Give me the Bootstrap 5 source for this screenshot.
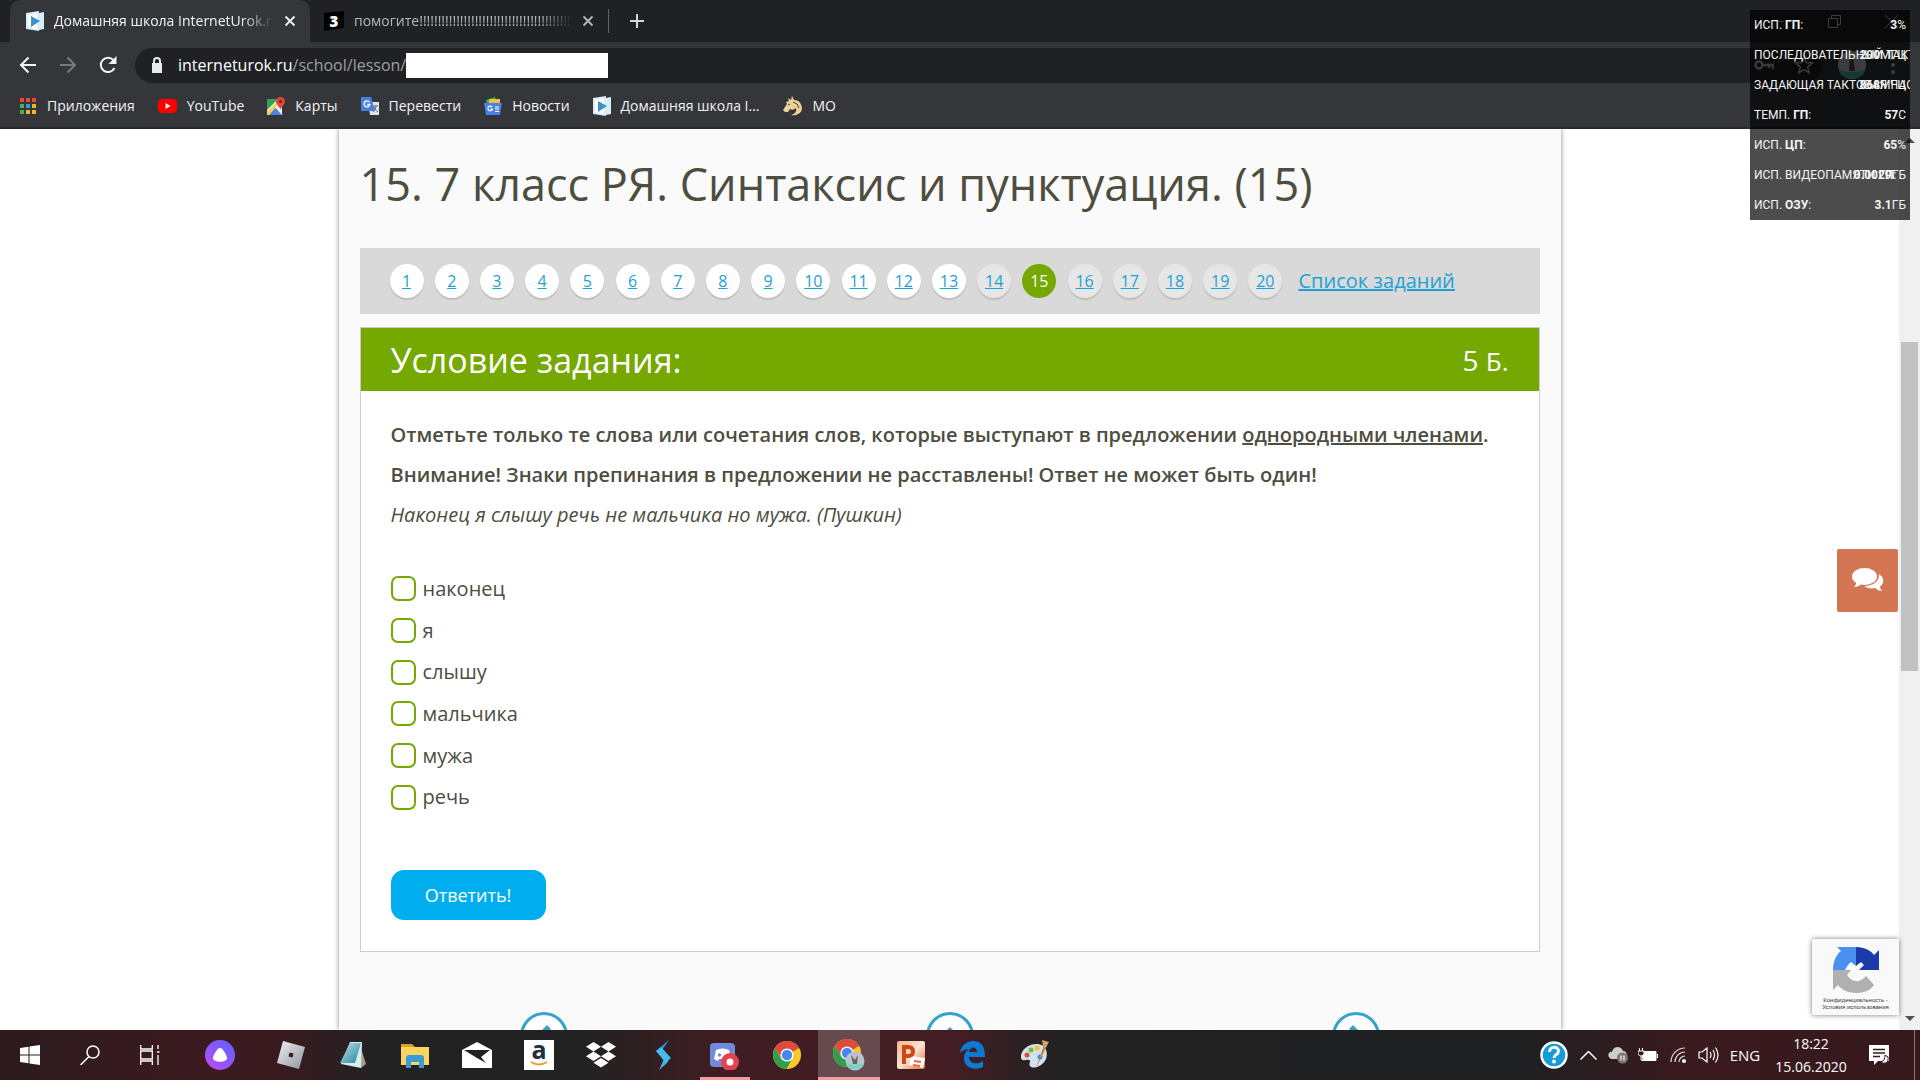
<!DOCTYPE html>
<html lang="ru">
<head>
<meta charset="utf-8">
<meta name="viewport" content="width=device-width, initial-scale=1">
<title>Домашняя школа InternetUrok.ru</title>
<link href="https://cdn.jsdelivr.net/npm/bootstrap@5.3.0/dist/css/bootstrap.min.css" rel="stylesheet">
<style>
:root{--shell:#202124;--bar:#35363a;--leaf:#75a800;--sky:#1da2d4;--ink:#4d4d40}
body{font-family:"Open Sans","Noto Sans",sans-serif;color:var(--ink);background:#fff}
svg{display:block;flex:none}
button{font-family:inherit}
.bare{border:0;background:none;padding:0;color:inherit;display:flex;align-items:center;justify-content:center}
/* browser frame */
.browser{background:var(--bar);color:#f1f3f4;font-size:14px;line-height:20px;border-bottom:2px solid #28292c}
.tabstrip{background:var(--shell);height:42px;padding-left:10px}
.tab-item{height:42px;width:300px;padding:0 14px 0 16px;gap:10px}
.tab-item.on{background:var(--bar);border-radius:10px 10px 0 0}
.tab-item .label{flex:1;overflow:hidden;white-space:nowrap;-webkit-mask-image:linear-gradient(90deg,#000 85%,transparent)}
.tab-item:not(.on){color:#b4b8bd;width:294px;padding:0 10px 0 14px}
.split{width:1px;height:24px;background:#5f6368}
.w40{width:40px;height:40px}
.winbtn{width:57px}
.toolbar-row{padding:3px 8px 0}
.address{height:35px;background:var(--shell);border-radius:18px;font-size:16px;padding:0 8px 0 13px;margin-left:7px}
.address .host{color:#fff}.address .path{color:#9aa0a6}
.address input{width:202px;height:25px;border:0;background:#fff;padding:0 6px;font-size:15px}
.marks{height:42px;gap:23px;padding-left:19px}
.marks a{color:#f1f3f4;text-decoration:none;display:flex;align-items:center;gap:10px;white-space:nowrap}
/* page */
.viewport{min-height:0}
.sheet{width:1222px;max-width:100%;background:#fafafa;box-shadow:0 0 5px #888;padding:0 21px}
.sheet h1{font-size:45px;line-height:60px;margin:25px 0 34px;font-weight:400}
.pager{background:#d9d9d9;height:66px;padding:0 30px;gap:16px}
.pager ul{width:893px}
.num{width:34px;height:34px;border-radius:50%;background:#fff;color:var(--sky);font-size:16px;line-height:34px;text-align:center;display:block;box-shadow:0 2px 1px #bfbfbf}
.num.dim{background:#e6e6e6}
.num.now{background:var(--leaf);color:#fff;text-decoration:none;box-shadow:none}
.pager .all{color:var(--sky);font-size:20px;white-space:nowrap}
.task{margin-top:13px;background:#fff;border:1px solid #ccc}
.task header{background:var(--leaf);color:#fff;height:63px;padding:0 30px}
.task h2{font-size:34px;line-height:48px;margin:0;font-weight:400}
.pts{font-size:28px}.pts small{font-size:26px}
.inner{padding:24px 30px 31px}
.inner p{font-size:20px;line-height:40px;margin:0}
.inner strong{font-weight:600}
.opts{height:250px;margin:33px 0 52px;font-size:20px;line-height:28px}
.opts label{display:flex;align-items:center;gap:7px;flex:1}
.opts input{appearance:none;width:25px;height:25px;border:2px solid var(--leaf);border-radius:7px;margin:0;background:#fff}
.send{background:#00aeef;color:#fff;border:0;border-radius:13px;width:155px;height:50px;font-size:18px}
.steps{margin:60px -19px 0}
.steps a{flex:1;display:flex;justify-content:center}
/* vertical scroll rail */
.rail{width:21px;background:#f0f0f0;padding:5px 2px;align-items:center}
.thumb{flex:0 0 329px;width:17px;background:#c1c1c1;margin-top:199px}
.chat{right:22px;top:420px;width:61px;height:63px;background:#d47554;border-radius:2px}
.captcha{right:21px;bottom:15px;width:87px;height:76px;background:#f9f9f9;box-shadow:0 0 5px #777;font:6px/7px "Liberation Sans",sans-serif;color:#333;text-align:center;border-radius:2px 0 0 2px;padding-top:8px;white-space:nowrap}
/* gpu monitor */
.gpu{right:10px;top:10px;width:160px;background:rgba(0,0,0,.7);color:#f4f4f4;font:12px/30px Roboto,sans-serif;z-index:5}
.gpu div{position:relative;height:30px;padding-left:4px;white-space:nowrap;overflow:hidden}
.gpu span{position:absolute;right:4px;top:0}
/* taskbar */
.taskbar{height:50px;color:#fff;background:linear-gradient(90deg,#2c1b1e 0,#3b1a20 200px,#3b1a20 270px,#222 380px,#222 580px,#3f1d22 720px,#431d23 950px,#222 1060px,#1f2022 1520px,#3b1a1f 1690px,#35191c)}
.taskbar button{height:50px;flex:none}
.c60{width:60px}.c80{width:80px}.c62{width:62px}.c30{width:30px}.c38{width:38px}.c44{width:44px;font-size:15px}.c48{width:48px}
.running{background:linear-gradient(#f19ba2,#f19ba2) center bottom/50px 3px no-repeat}
.focused{background:#674a4e;box-shadow:inset 0 -3px #f19ba2}
.clock{width:88px;font-size:14px;line-height:23px;text-align:center;padding-top:2px}
.edge-line{width:1px;margin:0 5px 0 11px;background:#8a7679}
</style>
<script src="https://cdn.jsdelivr.net/npm/bootstrap@5.3.0/dist/js/bootstrap.bundle.min.js"></script>
</head>
<body class="d-flex flex-column vh-100 overflow-hidden position-relative">
<svg width="0" height="0" class="position-absolute" aria-hidden="true">
<defs>
<linearGradient id="gA" x1="0" y1="1" x2="1" y2="0"><stop stop-color="#c04cf0"/><stop offset="1" stop-color="#5a63ff"/></linearGradient>
<linearGradient id="gR" x1="0" y1="0" x2="1" y2="1"><stop stop-color="#f2f2f2"/><stop offset="1" stop-color="#8d949c"/></linearGradient>
<linearGradient id="gN" x1="0" y1="0" x2="1" y2="1"><stop stop-color="#b5e4ea"/><stop offset="1" stop-color="#2e8398"/></linearGradient>
<linearGradient id="gS" x1="0" y1="0" x2="1" y2="1"><stop stop-color="#1d6fe8"/><stop offset="1" stop-color="#49d4f0"/></linearGradient>
<linearGradient id="gP" x1="0" y1="0" x2="1" y2="1"><stop stop-color="#f3b48f"/><stop offset=".5" stop-color="#fbe3d6"/><stop offset="1" stop-color="#e06a3a"/></linearGradient>
<symbol id="urok" viewBox="0 0 18 20"><path d="M0 2l13-2v2l5-1v17l-5 1v1L0 18z" fill="#d9ecf8"/><path d="M2 4l9-2v16l-9-2z" fill="#fff"/><path d="M5 5l9 5-9 6z" fill="#3f8fc9"/></symbol>
<symbol id="x" viewBox="0 0 12 12"><path d="M1.500 1.500l9 9m0-9l-9 9" stroke="currentColor" stroke-width="1.800"/></symbol>
<symbol id="chrome" viewBox="0 0 28 28"><circle cx="14" cy="14" r="14" fill="#fbc92c"/><path d="M14 14L1.900 7A14 14 0 0 1 26.100 7z" fill="#dd4b3e"/><path d="M14 7h12.100A14 14 0 0 0 1.900 7L8 17z" fill="#dd4b3e"/><path d="M1.900 7A14 14 0 0 0 13.500 28l6-10.500L14 20 8 17.500z" fill="#2da04f"/><circle cx="14" cy="14" r="6.600" fill="#fff"/><circle cx="14" cy="14" r="5.200" fill="#4587f3"/></symbol>
</defs></svg>

<header class="browser flex-shrink-0">
  <div class="tabstrip d-flex align-items-center">
    <div class="tab-item on d-flex align-items-center"><svg width="18" height="20"><use href="#urok"/></svg><span class="label">Домашняя школа InternetUrok.ru</span><button class="bare" aria-label="Закрыть вкладку"><svg width="12" height="12"><use href="#x"/></svg></button></div>
    <div class="tab-item d-flex align-items-center"><svg width="20" height="20" viewBox="0 0 20 20"><path d="M0 2l20-2v17L0 20z" fill="#000"/><text x="10" y="16" text-anchor="middle" font-size="15" font-weight="800" fill="#fff">3</text></svg><span class="label">помогите!!!!!!!!!!!!!!!!!!!!!!!!!!!!!!!!!!!!!!!!!!!!!!!!!!</span><button class="bare" aria-label="Закрыть вкладку"><svg width="12" height="12"><use href="#x"/></svg></button></div>
    <span class="split ms-1"></span>
    <button class="bare w40 ms-2" aria-label="Новая вкладка"><svg width="16" height="16"><path d="M8 1v14M1 8h14" stroke="#d5d7da" stroke-width="2"/></svg></button>
    <div class="d-flex ms-auto">
      <button class="bare winbtn" aria-label="Свернуть"><svg width="13" height="13"><path d="M0 6.500h13" stroke="#ccc"/></svg></button>
      <button class="bare winbtn" aria-label="Окно"><svg width="13" height="13"><path d="M.5 3.500h9v9h-9zM3.500 3V.5h9v9H10" fill="none" stroke="#ccc"/></svg></button>
      <button class="bare winbtn" aria-label="Закрыть"><svg width="13" height="13"><path d="M0 0l13 13m0-13L0 13" stroke="#ccc"/></svg></button>
    </div>
  </div>
  <div class="toolbar-row d-flex align-items-center">
    <button class="bare w40" aria-label="Назад"><svg width="18" height="18" fill="none" stroke="#f1f3f4" stroke-width="2"><path d="M17 9H2m7.500-7.500L2 9l7.500 7.500"/></svg></button>
    <button class="bare w40" aria-label="Вперёд"><svg width="18" height="18" fill="none" stroke="#77797d" stroke-width="2"><path d="M1 9h15M8.500 1.500L16 9l-7.500 7.500"/></svg></button>
    <button class="bare w40" aria-label="Обновить"><svg width="18" height="18" fill="none" stroke="#f1f3f4" stroke-width="2"><path d="M15.500 12A7.200 7.200 0 1 1 14.500 4.200"/><path d="M17.500 0v8h-8z" fill="#f1f3f4" stroke="none"/></svg></button>
    <div class="address d-flex align-items-center flex-fill">
      <svg width="18" height="18" viewBox="0 0 18 18"><path d="M4 7h10v10H4z" fill="#e8eaed"/><path d="M6 8V5a3 3 0 0 1 6 0v3" fill="none" stroke="#e8eaed" stroke-width="2"/></svg>
      <label for="addr" class="ms-2 ps-1 text-nowrap"><span class="host">interneturok.ru</span><span class="path">/school/lesson/</span></label>
      <input id="addr" type="text">
      <svg class="ms-auto me-3" width="20" height="20" viewBox="0 0 20 20" fill="none" stroke="#bbb" stroke-width="2.500"><circle cx="5" cy="10" r="3.500"/><path d="M8 10h11v4m-4-4v3"/></svg>
      <svg class="ms-1" width="20" height="20" viewBox="0 0 20 20" fill="none" stroke="#bbb" stroke-width="1.600"><path d="M10 2l2.300 5.500 6 .5-4.600 3.900 1.400 5.900L10 14.600l-5.100 3.200 1.400-5.900L1.700 8l6-.5z"/></svg>
    </div>
    <svg class="ms-3" width="28" height="28" viewBox="0 0 28 28"><circle cx="14" cy="14" r="14" fill="#c7c9c9"/><path d="M1 19q13 4 26 0a14 14 0 0 1-26 0z" fill="#3fc0a8"/><path d="M12 6h3l2 14h-6z" fill="#53463c"/></svg>
    <svg class="ms-4 me-3" width="6" height="20" fill="#ccc"><circle cx="3" cy="3" r="2"/><circle cx="3" cy="10" r="2"/><circle cx="3" cy="17" r="2"/></svg>
  </div>
  <nav class="marks d-flex align-items-center" aria-label="Закладки">
    <a href="#"><svg width="18" height="18" viewBox="0 0 18 18"><path d="M1 1h4v4H1zM7 1h4v4H7zM13 1h4v4h-4z" fill="#e8493c"/><path d="M1 7h4v4H1z" fill="#4caf50"/><path d="M7 7h4v4H7z" fill="#2d9be0"/><path d="M13 7h4v4h-4zM13 13h4v4h-4zM7 13h4v4H7z" fill="#f0b429"/><path d="M1 13h4v4H1z" fill="#4caf50"/></svg>Приложения</a>
    <a href="#"><svg width="19" height="18" viewBox="0 0 19 18"><rect y="2" width="19" height="14" rx="4" fill="#f00"/><path d="M7.500 6l5 3-5 3z" fill="#fff"/></svg>YouTube</a>
    <a href="#"><svg width="18" height="18" viewBox="0 0 18 18"><path d="M0 2h15v16H0z" fill="#e8e8e8"/><path d="M0 2h11L0 13z" fill="#34a058"/><path d="M0 18l8-8 8 8z" fill="#4a86e8"/><path d="M0 15L13 2l2 2L2 18H0z" fill="#fbd04b"/><path d="M8 10l2-2 5 6v4z" fill="#f2f2f2"/><path d="M13.500 0a4.500 4.500 0 0 1 4.500 4.500c0 3-3.500 5-4.500 8-1-3-4.500-5-4.500-8A4.500 4.500 0 0 1 13.500 0z" fill="#e3463a"/><circle cx="13.500" cy="4.500" r="1.600" fill="#8c1c14"/></svg>Карты</a>
    <a href="#"><svg width="18" height="18" viewBox="0 0 18 18"><path d="M7 5h11v13H9z" fill="#dfe3e8"/><path d="M0 0h10l4 14H0z" fill="#4a7fe0"/><path d="M8.500 5.200A3 3 0 1 0 9 7.500H6" fill="none" stroke="#fff" stroke-width="1.300"/><path d="M12 9h5m-2-1v1q0 4-3 6m1-5q1 3 4 5" fill="none" stroke="#66707c"/></svg>Перевести</a>
    <a href="#"><svg width="18" height="18" viewBox="0 0 18 18"><path d="M2 3l9-3 3 8H3z" fill="#34a853"/><path d="M5 2h11v7H5z" fill="#f3c234"/><path d="M0 6h18l-2 12H2z" fill="#4a80ea"/><path d="M8 10a2.300 2.300 0 1 0 .4 2.200H6.500M11 10h4m-4 2h4m-4 2.500h4" fill="none" stroke="#fff" stroke-width="1.200"/></svg>Новости</a>
    <a href="#"><svg width="18" height="20"><use href="#urok"/></svg>Домашняя школа I...</a>
    <a href="#"><svg width="20" height="20" viewBox="0 0 20 20"><path d="M0 14l4-6-1-2 3-1-1-3 3 2 1-4 2 4c6 0 8 5 8 9-1 5-6 7-11 6 4-1 6-4 5-7-2 2-4 2-6 1l-2 3-3 0z" fill="#ecd09a"/><path d="M10 6q5 1 6 6M5 8l2 1" fill="none" stroke="#4d3b25"/></svg>МО</a>
  </nav>
</header>

<div class="viewport d-flex flex-fill position-relative overflow-hidden">
  <main class="flex-fill d-flex justify-content-center">
    <div class="sheet">
      <h1>15. 7 класс РЯ. Синтаксис и пунктуация. (15)</h1>
      <nav class="pager d-flex align-items-center" aria-label="Задания">
        <ul class="list-unstyled d-flex justify-content-between m-0">
          <li><a class="num" href="#">1</a></li><li><a class="num" href="#">2</a></li><li><a class="num" href="#">3</a></li><li><a class="num" href="#">4</a></li><li><a class="num" href="#">5</a></li><li><a class="num" href="#">6</a></li><li><a class="num" href="#">7</a></li><li><a class="num" href="#">8</a></li><li><a class="num" href="#">9</a></li><li><a class="num" href="#">10</a></li><li><a class="num" href="#">11</a></li><li><a class="num" href="#">12</a></li><li><a class="num" href="#">13</a></li><li><a class="num dim" href="#">14</a></li><li><a class="num now" href="#" aria-current="page">15</a></li><li><a class="num dim" href="#">16</a></li><li><a class="num dim" href="#">17</a></li><li><a class="num dim" href="#">18</a></li><li><a class="num dim" href="#">19</a></li><li><a class="num dim" href="#">20</a></li>
        </ul>
        <a class="all" href="#">Список заданий</a>
      </nav>
      <section class="task">
        <header class="d-flex align-items-center justify-content-between"><h2>Условие задания:</h2><span class="pts">5 <small>Б.</small></span></header>
        <form class="inner">
          <p><strong>Отметьте только те слова или сочетания слов, которые выступают в предложении <u>однородными членами</u>.</strong></p>
          <p><strong>Внимание! Знаки препинания в предложении не расставлены! Ответ не может быть один!</strong></p>
          <p><em>Наконец я слышу речь не мальчика но мужа. (Пушкин)</em></p>
          <div class="opts d-flex flex-column">
            <label><input type="checkbox">наконец</label>
            <label><input type="checkbox">я</label>
            <label><input type="checkbox">слышу</label>
            <label><input type="checkbox">мальчика</label>
            <label><input type="checkbox">мужа</label>
            <label><input type="checkbox">речь</label>
          </div>
          <button type="button" class="send">Ответить!</button>
        </form>
      </section>
      <nav class="steps d-flex" aria-label="Переход">
        <a href="#" aria-label="Назад"><svg width="48" height="48" viewBox="0 0 48 48"><circle cx="24" cy="24" r="22.500" fill="#fff" stroke="#35a3cc" stroke-width="3"/><path d="M27 13l4 4-7 7 7 7-4 4-11-11z" fill="#35a3cc"/></svg></a>
        <a href="#" aria-label="К списку"><svg width="48" height="48" viewBox="0 0 48 48"><circle cx="24" cy="24" r="22.500" fill="#fff" stroke="#35a3cc" stroke-width="3"/><path d="M24 15l11 11-4 4-7-7-7 7-4-4z" fill="#35a3cc"/></svg></a>
        <a href="#" aria-label="Вперёд"><svg width="48" height="48" viewBox="0 0 48 48"><circle cx="24" cy="24" r="22.500" fill="#fff" stroke="#35a3cc" stroke-width="3"/><path d="M21 13l-4 4 7 7-7 7 4 4 11-11z" fill="#35a3cc"/></svg></a>
      </nav>
    </div>
  </main>
  <div class="rail d-flex flex-column">
    <svg class="mt-1" width="10" height="5"><path d="M0 5l5-5 5 5z" fill="#505050"/></svg>
    <div class="thumb"></div>
    <svg class="mt-auto mb-1" width="10" height="5"><path d="M0 0l5 5 5-5z" fill="#505050"/></svg>
  </div>
  <button class="bare chat position-absolute" aria-label="Чат"><svg width="32" height="26" viewBox="0 0 32 26" fill="#fff"><path d="M27 6c5 3 6 9 1 12.500q0 2.500 2 4.500-4 0-6.500-3c-5 1-9 0-11-2 9 0 15-5 14.500-12z"/><ellipse cx="12.500" cy="8.500" rx="12.500" ry="8.500"/><path d="M4 12q1 4-2 7 5 0 8-4z"/></svg></button>
  <div class="captcha position-absolute"><svg class="mx-auto mb-1" width="46" height="46" viewBox="0 0 46 46"><path d="M0 23C0 13 4 7 8 4L4 0h19v19l-5-4q-3 2-6 8z" fill="#4a90f0"/><path d="M23 0c9 0 15 4 18 8l5-5v20H26l5-5-3-3-5 4z" fill="#1c3aa9"/><path d="M0 23h18l-4 5c3 5 8 7 12 6q4-1 7-5l8 9c-4 6-11 8-18 8-9 0-15-4-18-8l-5 5z" fill="#b0b0b0"/></svg>Конфиденциальность -<br>Условия использования</div>
</div>

<footer class="taskbar d-flex flex-shrink-0">
  <button class="bare c60" aria-label="Пуск"><svg width="20" height="20" fill="#fff"><path d="M0 3l8.500-1.200v7.700H0zM9.500 1.600L20 0v9.500H9.500zM0 10.500h8.500v7.700L0 17zM9.500 10.500H20V20L9.500 18.400z"/></svg></button>
  <button class="bare c60" aria-label="Поиск"><svg width="20" height="20" fill="none" stroke="#fff" stroke-width="1.500"><circle cx="13" cy="7" r="6"/><path d="M9 11.500L.5 20"/></svg></button>
  <button class="bare c60" aria-label="Представление задач"><svg width="20" height="20" fill="none" stroke="#fff" stroke-width="1.300"><path d="M.7 0v4h11.600V0M.7 6h11.600v8H.7zM.7 20v-4h11.600v4M18 0v4m0 6v10M17 7h2.500"/></svg></button>
  <button class="bare c80" aria-label="Алиса"><svg width="30" height="30"><circle cx="15" cy="15" r="15" fill="url(#gA)"/><path d="M15 8c3 0 7 8 7 10 0 5-14 5-14 0 0-2 4-10 7-10z" fill="#fff"/></svg></button>
  <button class="bare c62" aria-label="Roblox"><svg width="28" height="28"><path d="M6 0l22 6-6 22L0 22z" fill="url(#gR)"/><path d="M12.500 11.500l4 1-1 4-4-1z" fill="#3a1a20"/></svg></button>
  <button class="bare c62" aria-label="Блокнот"><svg width="28" height="28"><path d="M20 1l7 22-5 4z" fill="#a29d86"/><path d="M11 1h12l-1 26-20-4z" fill="#d5edef"/><path d="M11 2h11l-6 20L1 22z" fill="url(#gN)"/></svg></button>
  <button class="bare c62" aria-label="Проводник"><svg width="28" height="28" viewBox="0 0 28 28"><path d="M0 3h11l3 3H0z" fill="#e49d22"/><path d="M0 6h28v18H0z" fill="#fcd462"/><path d="M5 27V17q0-3 3-3h12q3 0 3 3v10h-5v-6h-8v6z" fill="#3a9ad4"/></svg></button>
  <button class="bare c62" aria-label="Почта"><svg width="30" height="26"><path d="M0 8l15-8 15 8v18H0z" fill="#fff"/><path d="M2 8h26L19 15l5 6-9-5z" fill="#202124"/></svg></button>
  <button class="bare c62" aria-label="Amazon"><svg width="30" height="30"><path d="M0 0h30v30H0z" fill="#fff"/><text x="15" y="19" text-anchor="middle" font-size="25" font-weight="700" fill="#222f3e">a</text><path d="M7 22q8 5 16 0" fill="none" stroke="#f5982b" stroke-width="2"/></svg></button>
  <button class="bare c62" aria-label="Dropbox"><svg width="30" height="26" fill="#fff"><path d="M7.500 0L15 4.700 7.500 9.500 0 4.700zM22.500 0L30 4.700l-7.500 4.800L15 4.700zM7.500 9.500L15 14.200 7.500 19 0 14.200zM22.500 9.500L30 14.200 22.500 19 15 14.200zM15 16l7.500 4.700L15 25.500l-7.500-4.800z"/></svg></button>
  <button class="bare c62" aria-label="Приложение S"><svg width="16" height="30"><path d="M14 0L8 5 1 11l8 8-5 11 8-7 3-5-8-8z" fill="url(#gS)"/><path d="M1 11l5-4 10 11-6 4z" fill="#42bdf2"/></svg></button>
  <button class="bare c62 running" aria-label="Discord"><svg width="30" height="30" viewBox="0 0 30 30"><rect y="3" width="25" height="24" rx="4" fill="#7289da"/><path d="M6 10q6-3 13 0l2 9-4 2-1-2h-7l-1 2-4-2z" fill="#fff"/><circle cx="9.500" cy="15" r="1.700" fill="#7289da"/><circle cx="20" cy="22" r="9" fill="#e2424b"/><circle cx="20" cy="22" r="3.500" fill="#fff"/></svg></button>
  <button class="bare c62" aria-label="Chrome"><svg width="28" height="28"><use href="#chrome"/></svg></button>
  <button class="bare c62 focused" aria-label="Chrome, профиль"><svg width="32" height="32" viewBox="0 0 32 32"><svg width="28" height="28"><use href="#chrome"/></svg><circle cx="22" cy="22" r="9.500" fill="#bac3d0"/><path d="M13 24q9 3 18 0a9.500 9.500 0 0 1-18 0z" fill="#75d3c4"/><path d="M18 16l4 5 3-5-1 9h-4z" fill="#6b6254"/></svg></button>
  <button class="bare c62" aria-label="PowerPoint"><svg width="28" height="28"><rect width="28" height="28" rx="2" fill="url(#gP)"/><path d="M14 15l14 2-2 10-14-3z" fill="#fff"/><path d="M7 23V6h4q5 0 5 4.500T11 15H8" fill="none" stroke="#d2470f" stroke-width="4"/><path d="M17 20l7 1m-8 3l7 1" stroke="#e06a3a" stroke-width="2"/></svg></button>
  <button class="bare c62" aria-label="Edge"><svg width="26" height="28" viewBox="0 0 26 28"><path d="M0 12C1 4 7 0 13 0c9 0 12 6 12 16H9c0 7 9 8 14 4v6c-9 4-19 1-19-9 0-4 2-8 6-9-5 0-8 2-10 4zM9 11h8c0-6-7-6-8 0z" fill="#0a7ad6"/></svg></button>
  <button class="bare c62" aria-label="Paint"><svg width="30" height="30" viewBox="0 0 30 30"><path d="M1 18C0 9 10 3 18 4c9 1 10 10 8 15-3 7-13 11-16 7-2-3 2-5-1-6s-7 2-8-2z" fill="#cfe2ee"/><circle cx="7" cy="15" r="2.500" fill="#d94b3b"/><circle cx="11" cy="10" r="2.500" fill="#7bb93d"/><circle cx="17" cy="8" r="2.500" fill="#f2c330"/><circle cx="20" cy="17" r="2.500" fill="#3c8edb"/><path d="M24 5l3 1-11 22z" fill="#c9853e"/><path d="M22 0l7 2-3 5-3-1z" fill="#d8a06b"/></svg></button>
  <button class="bare c38 ms-auto" aria-label="Справка"><svg width="28" height="28"><circle cx="14" cy="14" r="12.500" fill="#159bd7" stroke="#fff" stroke-width="2.500"/><path d="M9.500 11c0-6 9-6 9-1 0 4-4.500 3-4.500 7" fill="none" stroke="#fff" stroke-width="3"/><circle cx="14" cy="20.500" r="2" fill="#fff"/></svg></button>
  <button class="bare c30" aria-label="Скрытые значки"><svg width="17" height="9" fill="none" stroke="#fff" stroke-width="1.500"><path d="M.5 8.500l8-8 8 8"/></svg></button>
  <button class="bare c30" aria-label="Облако"><svg width="20" height="18"><path d="M3 13C-2 10 1 5 4 6c1-6 9-7 11-1 5 0 5 8 0 8z" fill="#ccc"/><circle cx="14.500" cy="12" r="5.500" fill="#777"/><path d="M13 9.500v5m3-5v5" stroke="#fff" stroke-width="1.200"/></svg></button>
  <button class="bare c30" aria-label="Батарея"><svg width="20" height="14"><path d="M4 3.500h14v9H4z" fill="#fff" stroke="#fff"/><path d="M19 6h1v4h-1z" fill="#fff"/><path d="M0 3h6v3q-1 2-3 2T0 6zM1.500 0v3m3-3v3M3 8v4h2" fill="#3b1a1f" stroke="#fff"/></svg></button>
  <button class="bare c30" aria-label="Сеть"><svg width="16" height="16" fill="none" stroke="#ddd" stroke-width="1.200"><path d="M1 15A14 14 0 0 1 15 1M5 15A10 10 0 0 1 15 5M9 15a6 6 0 0 1 6-6"/><circle cx="14" cy="14" r="1.500" fill="#fff"/></svg></button>
  <button class="bare c30" aria-label="Звук"><svg width="21" height="18" fill="none" stroke="#fff" stroke-width="1.200"><path d="M1 6h3l5-4v14l-5-4H1zM12 6q2 3 0 6M15 4q3 5 0 10M17.500 1.500q5 7.500 0 15"/></svg></button>
  <button class="bare c44">ENG</button>
  <div class="clock">18:22<br>15.06.2020</div>
  <button class="bare c48" aria-label="Уведомления"><svg width="20" height="20"><path d="M0 0h20v16H9l-4 4v-4H0z" fill="#fff"/><path d="M4 4.500h12M4 8h12M4 11.500h7" stroke="#3b1a1f" stroke-width="1.300"/><path d="M16 10c0 4-1 6-4 7 4 3 8 0 7-5z" fill="#fff" stroke="#3b1a1f"/></svg></button>
  <span class="edge-line"></span>
</footer>

<aside class="gpu position-absolute" aria-label="Мониторинг">
  <div>ИСП. <b>ГП</b>:<span><b>3</b>%</span></div>
  <div>ПОСЛЕДОВАТЕЛЬНЫЙ ТАКТОВ<span><b>200</b>МГЦ</span></div>
  <div>ЗАДАЮЩАЯ ТАКТОВАЯ ЧАСТО<span><b>868</b>МГЦ</span></div>
  <div>ТЕМП. <b>ГП</b>:<span><b>57</b>C</span></div>
  <div>ИСП. <b>ЦП</b>:<span><b>65</b>%</span></div>
  <div>ИСП. ВИДЕОПАМЯТИ <b>ГП</b>:<span><b>0.0029</b>ГБ</span></div>
  <div>ИСП. <b>ОЗУ</b>:<span><b>3.1</b>ГБ</span></div>
</aside>
</body>
</html>
